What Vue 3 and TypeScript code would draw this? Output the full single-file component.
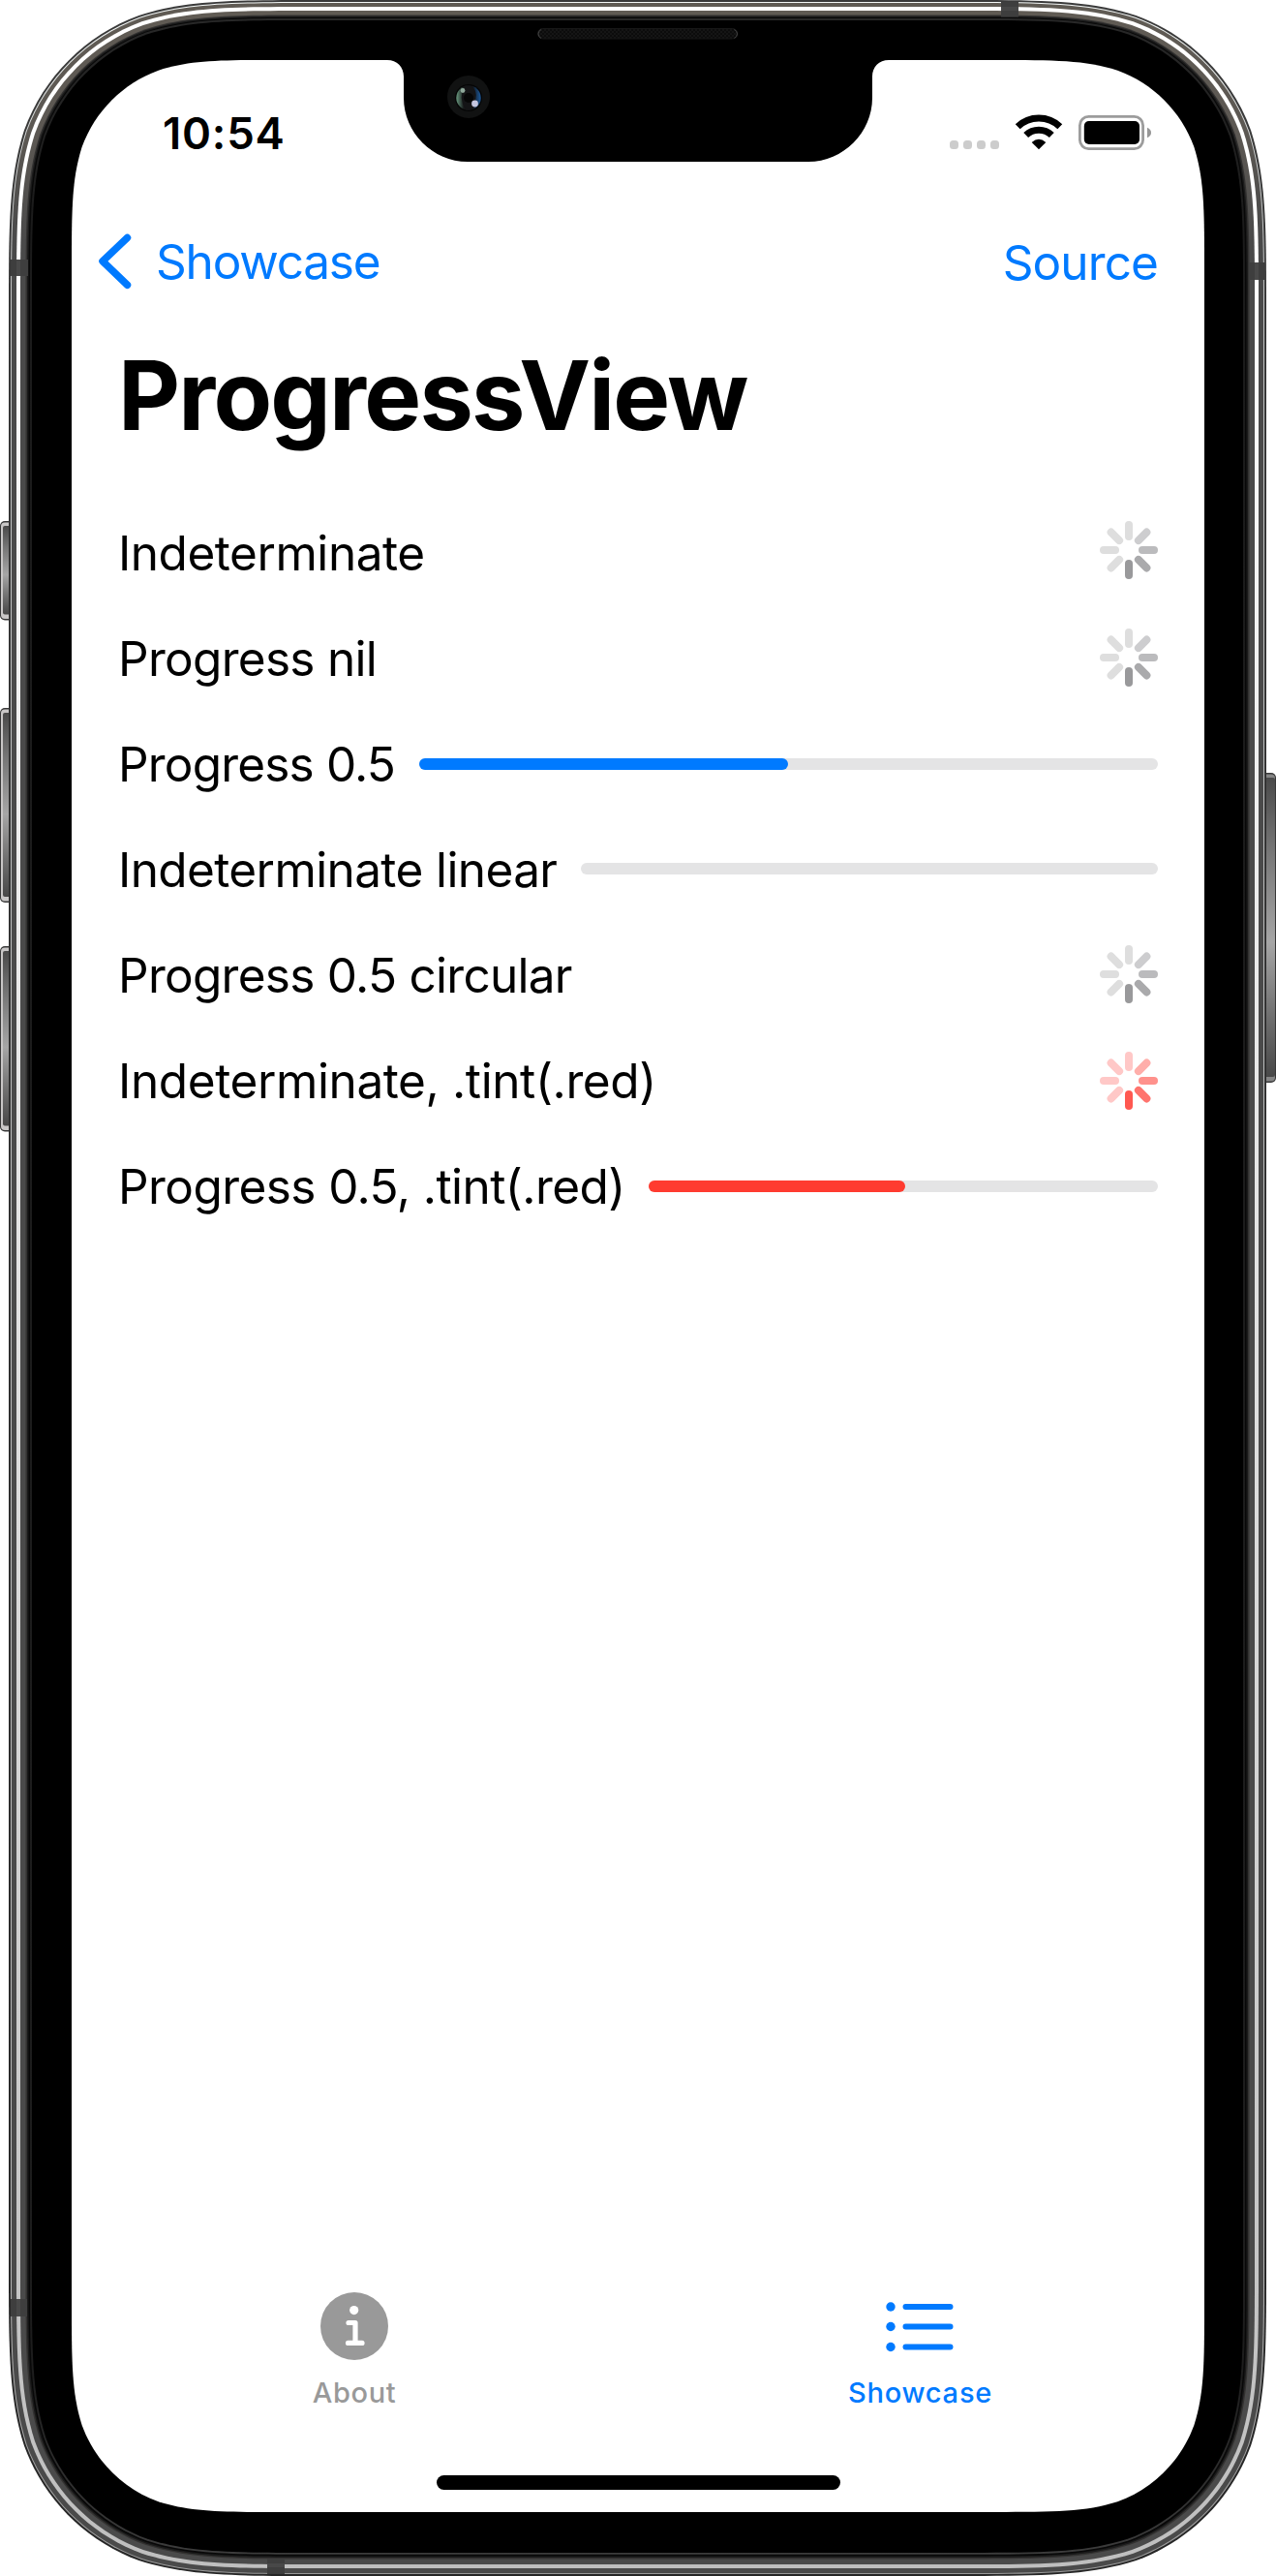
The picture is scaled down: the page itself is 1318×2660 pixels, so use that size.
<script setup lang="ts">
type Row = {
  label: string
  spacing: number
  kind: 'spinner' | 'bar'
  value?: number
  tint: string
  shift: number
}

const rows: Row[] = [
  { label: 'Indeterminate', spacing: -0.46, kind: 'spinner', tint: 'gray', shift: -4 },
  { label: 'Progress nil', spacing: -0.7, kind: 'spinner', tint: 'gray', shift: -2 },
  { label: 'Progress 0.5', spacing: -0.82, kind: 'bar', value: 0.5, tint: 'blue', shift: -1 },
  { label: 'Indeterminate linear', spacing: -0.61, kind: 'bar', value: 0, tint: 'blue', shift: -2 },
  { label: 'Progress 0.5 circular', spacing: -0.72, kind: 'spinner', tint: 'gray', shift: -2 },
  { label: 'Indeterminate, .tint(.red)', spacing: -0.39, kind: 'spinner', tint: 'red', shift: -1 },
  { label: 'Progress 0.5, .tint(.red)', spacing: -0.57, kind: 'bar', value: 0.504, tint: 'red', shift: -1 },
]

// Spoke colours, clockwise from twelve o'clock
const spokes: Record<string, string[]> = {
  gray: ['#dedede', '#cdcdcf', '#bbbbbd', '#aaaaac', '#99999b', '#dedede', '#dedede', '#dedede'],
  red: ['#ffc8c7', '#ffaeaa', '#ff918c', '#ff746e', '#ff5850', '#ffc8c7', '#ffc8c7', '#ffc8c7'],
}

// Rounded rectangle with continuous-curvature corners
function squircle(x0: number, y0: number, x1: number, y1: number, r: number): string {
  const corner: [number, number][] = [
    [0, 1.52866], [0, 1.08849], [0, 0.86841], [0.07491, 0.63149],
    [0.16906, 0.37282], [0.37282, 0.16906], [0.63149, 0.07491],
    [0.86841, 0], [1.08849, 0], [1.52866, 0],
  ]
  const place = (dx: number, dy: number, reverse: boolean) => {
    const pts = corner.map(([a, b]) => {
      const x = dx > 0 ? x0 + a * r : x1 - a * r
      const y = dy > 0 ? y0 + b * r : y1 - b * r
      return `${x.toFixed(2)} ${y.toFixed(2)}`
    })
    return reverse ? pts.reverse() : pts
  }
  const all = [place(1, 1, false), place(-1, 1, true), place(-1, -1, false), place(1, -1, true)]
  return (
    all
      .map((p, i) => `${i ? 'L' : 'M'}${p[0]}C${p[1]} ${p[2]} ${p[3]}C${p[4]} ${p[5]} ${p[6]}C${p[7]} ${p[8]} ${p[9]}`)
      .join('') + 'Z'
  )
}

// Side, top and bottom insets of each ring of the metal band
const rings = [
  { s: 0, t: 0, b: 0, fill: 'url(#edge)' },
  { s: 2, t: 2, b: 2, fill: 'url(#thin)' },
  { s: 3, t: 3, b: 3, fill: 'url(#metal)' },
  { s: 8, t: 7, b: 8, fill: 'url(#shine)' },
  { s: 12, t: 11, b: 12, fill: 'url(#metal)' },
  { s: 17.5, t: 15.5, b: 17.5, fill: '#333231' },
  { s: 19, t: 16.7, b: 19, fill: '#1a1a1a' },
  { s: 20.5, t: 18, b: 20.5, fill: '#080808' },
  { s: 22, t: 19, b: 22.3, fill: 'url(#line)' },
  { s: 24, t: 21, b: 24, fill: '#000' },
].map((g) => ({ d: squircle(9 + g.s, g.t, 1308 - g.s, 2660 - g.b, 213 - g.s), fill: g.fill }))

const screenPath = squircle(74, 62, 1244, 2594, 142)

const buttons = [
  { x: 0, y: 538, h: 102.5 },
  { x: 0, y: 731, h: 201 },
  { x: 0, y: 977, h: 191.5 },
  { x: 1300, y: 798, h: 320 },
]

const antennas = [
  { x: 11, y: 268, w: 18, h: 17 },
  { x: 1290, y: 271, w: 17, h: 18 },
  { x: 1034, y: 2, w: 18, h: 15.5 },
  { x: 11, y: 2374, w: 17, h: 18 },
  { x: 276, y: 2642, w: 18, h: 16 },
]
</script>

<template>
  <div class="phone">
    <svg class="bezel" width="1318" height="2660" viewBox="0 0 1318 2660" aria-hidden="true">
      <defs>
        <linearGradient id="edge" x1="0" y1="0" x2="0" y2="1">
          <stop offset="0" stop-color="#3a3a3a" /><stop offset="1" stop-color="#262626" />
        </linearGradient>
        <linearGradient id="thin" x1="0" y1="0" x2="0" y2="1">
          <stop offset="0" stop-color="#f4f8f7" /><stop offset="0.08" stop-color="#c4c6c6" />
          <stop offset="0.9" stop-color="#b4b4b4" /><stop offset="1" stop-color="#999" />
        </linearGradient>
        <linearGradient id="metal" x1="0" y1="0" x2="0" y2="1">
          <stop offset="0" stop-color="#605b54" /><stop offset="0.05" stop-color="#5c5853" />
          <stop offset="0.09" stop-color="#4a4a4a" /><stop offset="1" stop-color="#4a4a4a" />
        </linearGradient>
        <linearGradient id="shine" x1="0" y1="0" x2="0" y2="1">
          <stop offset="0.1" stop-color="#fff" /><stop offset="0.25" stop-color="#f2f2f2" />
          <stop offset="0.45" stop-color="#e6e6e6" /><stop offset="0.88" stop-color="#c6c6c6" />
          <stop offset="1" stop-color="#bfbfbf" />
        </linearGradient>
        <linearGradient id="line" x1="0" y1="0" x2="0" y2="1">
          <stop offset="0" stop-color="#282828" /><stop offset="0.08" stop-color="#1b1b1b" />
          <stop offset="0.93" stop-color="#1d1d1d" /><stop offset="1" stop-color="#3c3c3c" />
        </linearGradient>
        <linearGradient id="button" x1="0" y1="0" x2="0" y2="1">
          <stop offset="0" stop-color="#4a4a4a" /><stop offset="0.25" stop-color="#777" />
          <stop offset="0.55" stop-color="#a6a6a6" /><stop offset="0.8" stop-color="#6f6f6f" />
          <stop offset="1" stop-color="#484848" />
        </linearGradient>
        <linearGradient id="iris" x1="0" y1="0" x2="1" y2="0">
          <stop offset="0" stop-color="#6a9a80" /><stop offset="0.3" stop-color="#16181a" />
          <stop offset="0.65" stop-color="#101318" /><stop offset="1" stop-color="#1d5a9c" />
        </linearGradient>
        <pattern id="mesh" width="4" height="4" patternUnits="userSpaceOnUse">
          <rect width="4" height="4" fill="#0c0c0c" /><rect width="2" height="2" fill="#151515" />
          <rect x="2" y="2" width="2" height="2" fill="#151515" />
        </pattern>
      </defs>

      <g v-for="(b, i) in buttons" :key="'b' + i">
        <rect :x="b.x" :y="b.y" width="18" :height="b.h" rx="5" fill="#383838" />
        <rect :x="b.x + 1" :y="b.y + 1.5" width="16" :height="b.h - 3" rx="4" :fill="b.x ? '#858585' : '#c9c7c7'" />
        <rect :x="b.x + 3" :y="b.y + 5" :width="b.x ? 14 : 12" :height="b.h - 11" rx="2" fill="url(#button)" />
      </g>

      <path v-for="(g, i) in rings" :key="'r' + i" :d="g.d" :fill="g.fill" />
      <g v-for="(a, i) in antennas" :key="'a' + i">
        <rect :x="a.x" :y="a.y" :width="a.w" :height="a.h" fill="#3e3e3e" />
        <rect v-if="a.w < 18 || a.h === 17" :x="a.x + 6" :y="a.y" width="4" :height="a.h" fill="#494949" />
        <rect v-else :x="a.x" :y="a.y + 5" :width="a.w" height="4" fill="#484848" />
      </g>

      <path :d="screenPath" fill="#fff" />
      <path
        d="M400 61V62C410 62 417 69 417 79V101C417 137 447 167 483 167H835C871 167 901 137 901 101V79C901 69 908 62 918 62V61Z"
        fill="#000"
      />
      <rect x="555.5" y="29.5" width="206" height="10.5" rx="5" fill="url(#mesh)" stroke="#171717" />
      <path d="M559 30.500Q556 32 556 35T559 39.500M758.500 30.500Q761.500 32 761.500 35T758.500 39.500" fill="none" stroke="#444" />
      <circle cx="484" cy="100" r="22" fill="#111212" />
      <circle cx="484" cy="101" r="14" fill="#050505" />
      <circle cx="484" cy="101" r="12.700" fill="url(#iris)" />
      <path d="M480 88.500Q473 101 481 113.500Q492 115 489 107Q495 98 488 89Z" fill="#141416" />
      <circle cx="484" cy="101" r="5" fill="#060606" />
      <circle cx="478" cy="93.500" r="2.400" fill="#8fa89a" />
      <circle cx="490.500" cy="107" r="3.400" fill="#c4c6e0" />
    </svg>

    <main class="screen">
      <header class="status">
        <span class="time">10:54</span>
        <div class="indicators">
          <svg width="208" height="40" viewBox="980 116 208 40" aria-hidden="true">
            <g fill="#ccc">
              <rect x="981" y="145" width="9" height="9" rx="3.500" />
              <rect x="995" y="145" width="9" height="9" rx="3.500" />
              <rect x="1009" y="145" width="9" height="9" rx="3.500" />
              <rect x="1023" y="145" width="9" height="9" rx="3.500" />
            </g>
            <g fill="none" stroke="#000" stroke-width="7">
              <path d="M1051.200 130.800A31.500 31.500 0 0 1 1094.800 130.800" />
              <path d="M1059.700 139.500A19.300 19.300 0 0 1 1086.300 139.500" />
            </g>
            <path d="M1073 154.300L1065.700 146.900Q1073 140.800 1080.300 146.900Z" fill="#000" />
            <rect x="1115.400" y="120.400" width="65.200" height="33.200" rx="9" fill="none" stroke="#9c9c9c" stroke-width="2.800" />
            <rect x="1119.800" y="125" width="57.200" height="24" rx="5" fill="#000" />
            <path d="M1185 131.800Q1189 133.500 1189 137T1185 142.200Z" fill="#969696" />
          </svg>
        </div>
      </header>

      <nav class="nav">
        <a class="back">
          <svg width="60" height="60" viewBox="0 0 60 60" aria-hidden="true">
            <path d="M31.500 5.500L6 29.700L31.500 54.300" fill="none" stroke="currentColor" stroke-width="7.500" stroke-linecap="round" stroke-linejoin="round" />
          </svg>
          <span>Showcase</span>
        </a>
        <a class="source">Source</a>
      </nav>

      <h1 class="title">ProgressView</h1>

      <ul class="list">
        <li v-for="row in rows" :key="row.label" class="row">
          <span class="label" :style="{ letterSpacing: row.spacing + 'px' }">{{ row.label }}</span>
          <svg
            v-if="row.kind === 'spinner'"
            class="spinner"
            :style="{ transform: `translateY(${row.shift}px)` }"
            width="60"
            height="60"
            viewBox="-30 -30 60 60"
          >
            <rect
              v-for="(c, i) in spokes[row.tint]"
              :key="i"
              x="-4"
              y="-30"
              width="8"
              height="20"
              rx="4"
              :fill="c"
              :transform="`rotate(${i * 45})`"
            />
          </svg>
          <div v-else class="track" :style="{ transform: `translateY(${row.shift}px)` }">
            <div v-if="row.value" class="fill" :class="row.tint" :style="{ width: row.value * 100 + '%' }"></div>
          </div>
        </li>
      </ul>

      <footer class="tabs">
        <a class="tab">
          <svg width="70" height="84" viewBox="0 0 70 84" aria-hidden="true">
            <circle cx="35" cy="42" r="35" fill="currentColor" />
            <circle cx="34.700" cy="25.600" r="4.600" fill="#fff" />
            <path d="M29 38.500H36V59M28.500 59.400H43" fill="none" stroke="#fff" stroke-width="5.200" stroke-linecap="round" stroke-linejoin="round" />
          </svg>
          <span class="about">About</span>
        </a>
        <a class="tab active">
          <svg width="72" height="84" viewBox="0 0 72 84" aria-hidden="true">
            <g fill="currentColor">
              <circle cx="6" cy="22" r="4.700" /><circle cx="6" cy="42.500" r="4.700" /><circle cx="6" cy="63.500" r="4.700" />
            </g>
            <path d="M21.500 22H67.500M21.500 42.500H67.500M21.500 63.500H67.500" stroke="currentColor" stroke-width="6" stroke-linecap="round" />
          </svg>
          <span class="showcase">Showcase</span>
        </a>
      </footer>
      <div class="home"></div>
    </main>
  </div>
</template>

<style>
body {
  background: #fff;
}
</style>

<style scoped>
.phone {
  position: relative;
  box-sizing: border-box;
  width: 1318px;
  height: 2660px;
  padding: 62px 74px 66px;
  overflow: hidden;
  font-family: Inter, 'Liberation Sans', sans-serif;
  color: #000;
}
.bezel {
  position: absolute;
  inset: 0;
}
.screen {
  position: relative;
  display: flex;
  flex-direction: column;
  height: 2532px;
}
.status {
  display: flex;
  justify-content: space-between;
  height: 151px;
  padding: 0 56px 0 94px;
}
.time {
  font-size: 45.5px;
  font-weight: 600;
  letter-spacing: 0.8px;
  line-height: 151px;
}
.indicators {
  padding-top: 54px;
}
.indicators svg {
  display: block;
  overflow: visible;
}
.nav {
  display: flex;
  justify-content: space-between;
  height: 114px;
  padding: 0 48px 0 26px;
  color: #007aff;
  font-size: 49.5px;
  line-height: 114px;
}
.back {
  display: flex;
  align-items: center;
  gap: 1px;
  letter-spacing: -1.2px;
}
.source {
  padding-top: 1px;
  letter-spacing: -0.9px;
}
.title {
  margin: 0;
  padding-left: 48px;
  font-size: 99px;
  font-weight: 700;
  line-height: 162px;
  letter-spacing: -1.8px;
}
.list {
  margin: 0;
  padding: 28px 48px 0;
  list-style: none;
}
.row {
  display: flex;
  align-items: center;
  gap: 24.5px;
  height: 109px;
}
.label {
  flex: none;
  font-size: 49.5px;
  line-height: 109px;
  white-space: nowrap;
}
.spinner {
  margin-left: auto;
}
.track {
  flex: 1;
  height: 12px;
  border-radius: 6px;
  background: #e4e4e5;
}
.fill {
  height: 12px;
  border-radius: 6px;
}
.fill.blue {
  background: #007aff;
}
.fill.red {
  background: #ff3b30;
}
.tabs {
  display: flex;
  margin-top: auto;
  margin-bottom: 59px;
}
.tab {
  flex: 1;
  display: flex;
  flex-direction: column;
  align-items: center;
  color: #999;
  font-size: 29px;
  font-weight: 500;
  line-height: 53px;
}
.tab.active {
  color: #007aff;
}
.tab svg {
  margin-right: 1px;
}
.tab.active svg {
  margin-right: 3px;
}
.about {
  margin-right: 1px;
  letter-spacing: 0.65px;
}
.showcase {
  margin-right: 2px;
  letter-spacing: 0.79px;
}
.home {
  flex: none;
  align-self: center;
  width: 417px;
  height: 15px;
  margin-bottom: 23px;
  border-radius: 8px;
  background: #000;
}
</style>
